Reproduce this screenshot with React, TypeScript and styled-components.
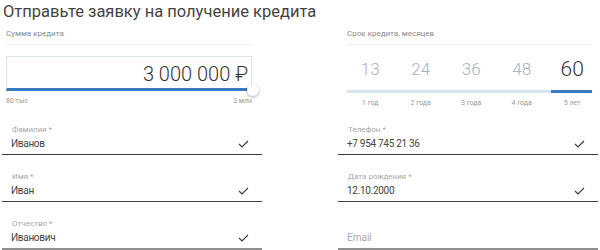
import * as React from 'react';
import styled, {createGlobalStyle} from "styled-components";

const GlobalStyle = createGlobalStyle`
  html, body {
    margin: 0;
    padding: 0;
    background: #ffffff;
  }
  body {
    font-family: Roboto, "Liberation Sans", sans-serif;
    color: #333333;
  }
`;

const terms = [
    {months: 13, label: '1 год'},
    {months: 24, label: '2 года'},
    {months: 36, label: '3 года'},
    {months: 48, label: '4 года'},
    {months: 60, label: '5 лет'},
];

interface IFieldProps {
    label?: string;
    value?: string;
    placeholder?: string;
    last?: boolean;
}

const Check = () => (
    <CheckIcon width="11" height="8" viewBox="0 0 11 8">
        <polyline points="1,4 4,7 10,1" fill="none" stroke="#3a3a3a" strokeWidth="1.1"/>
    </CheckIcon>
);

const Field = ({label, value, placeholder, last}: IFieldProps) => (
    <FieldStyled last={last}>
        <FieldLabel>{label || '\u00a0'}</FieldLabel>
        <FieldRow>
            {value ? <FieldValue>{value}</FieldValue> : <Placeholder>{placeholder}</Placeholder>}
            {value && <Check/>}
        </FieldRow>
    </FieldStyled>
);

class App extends React.Component<{}, {}> {
    public render() {
        const active = 60;
        return (
            <Page>
                <GlobalStyle/>
                <Title>Отправьте заявку на получение кредита</Title>
                <Columns>
                    <Amount>
                        <Caption>Сумма кредита</Caption>
                        <AmountBox>
                            <AmountValue>3 000 000 ₽</AmountValue>
                            <Thumb/>
                        </AmountBox>
                        <Limits>
                            <span>80 тыс</span>
                            <span>3 млн</span>
                        </Limits>
                    </Amount>
                    <Term>
                        <Caption>Срок кредита, месяцев</Caption>
                        <TermGrid>
                            {terms.map(t => (
                                <TermNumber key={t.months} active={t.months === active}>{t.months}</TermNumber>
                            ))}
                        </TermGrid>
                        <Track>
                            <TrackFill/>
                        </Track>
                        <TermGrid>
                            {terms.map(t => (
                                <TermLabel key={t.label}>{t.label}</TermLabel>
                            ))}
                        </TermGrid>
                    </Term>
                </Columns>
                <Fields>
                    <Field label="Фамилия *" value="Иванов"/>
                    <Field label="Телефон *" value="+7 954 745 21 36"/>
                    <Field label="Имя *" value="Иван"/>
                    <Field label="Дата рождения *" value="12.10.2000"/>
                    <Field label="Отчество *" value="Иванович" last={true}/>
                    <Field placeholder="Email" last={true}/>
                </Fields>
            </Page>
        );
    }
}

const Page = styled.div`
  width: 600px;
  height: 250px;
  overflow: hidden;
  padding-left: 2px;
  box-sizing: border-box;
`;

const Title = styled.h1`
  margin: 0;
  padding: 1px 0 0 1px;
  font-size: 16.5px;
  line-height: 21px;
  font-weight: 400;
  color: #444444;
`;

const Columns = styled.div`
  display: grid;
  grid-template-columns: 260px 260px;
  column-gap: 76px;
  margin-top: 7px;
`;

const Amount = styled.div`
  padding: 0 10px 0 4px;
`;

const Term = styled.div`
  padding: 0 6px 0 9px;
`;

const Caption = styled.div`
  font-size: 8px;
  line-height: 10px;
  color: #8a8a8a;
  padding-bottom: 5px;
  border-bottom: 1px solid #eef1f4;
`;

const AmountBox = styled.div`
  position: relative;
  margin-top: 11px;
  height: 31px;
  border: 1px solid #d9e4ef;
  border-bottom: 3px solid #3b78c2;
  display: flex;
  align-items: center;
  justify-content: flex-end;
  padding-right: 3px;
`;

const AmountValue = styled.div`
  font-size: 20px;
  font-weight: 300;
  color: #333333;
  padding-top: 3px;
`;

const Thumb = styled.div`
  position: absolute;
  right: -8px;
  bottom: -8px;
  width: 12px;
  height: 12px;
  border-radius: 50%;
  background: #ffffff;
  box-shadow: 0 1px 3px rgba(0, 0, 0, 0.35);
`;

const Limits = styled.div`
  display: flex;
  justify-content: space-between;
  margin-top: 6px;
  font-size: 7px;
  line-height: 9px;
  color: #999999;
`;

const TermGrid = styled.div`
  display: grid;
  grid-template-columns: repeat(5, 50.5px);
  margin-left: -2px;
`;

const TermNumber = styled.div<{active?: boolean}>`
  text-align: center;
  margin-top: 12px;
  font-size: ${p => p.active ? 21 : 17}px;
  line-height: 24px;
  font-weight: 300;
  color: ${p => p.active ? '#333333' : '#a7b2c1'};
`;

const Track = styled.div`
  margin-top: 9px;
  height: 3px;
  background: #d9e4f1;
  display: flex;
  justify-content: flex-end;
`;

const TrackFill = styled.div`
  width: 41px;
  background: #3b78c2;
`;

const TermLabel = styled.div`
  text-align: center;
  margin-top: 6px;
  font-size: 7px;
  line-height: 9px;
  color: #999999;
`;

const Fields = styled.div`
  display: grid;
  grid-template-columns: 260px 260px;
  column-gap: 76px;
  row-gap: 17px;
  margin-top: 17px;
`;

const FieldStyled = styled.div<{last?: boolean}>`
  border-bottom: ${p => p.last ? '3px solid #8f8f8f' : '1.5px solid #404040'};
`;

const FieldLabel = styled.div`
  padding-left: 10px;
  font-size: 8px;
  line-height: 10px;
  color: #a8a8a8;
`;

const FieldRow = styled.div`
  display: flex;
  justify-content: space-between;
  align-items: center;
  margin-top: 2px;
  padding: 0 13px 4px 9px;
`;

const FieldValue = styled.div`
  font-size: 10px;
  line-height: 13px;
  letter-spacing: -0.3px;
  color: #444444;
`;

const Placeholder = styled.div`
  font-size: 10px;
  line-height: 13px;
  color: #a8a8a8;
`;

const CheckIcon = styled.svg`
  display: block;
`;

export default App;
